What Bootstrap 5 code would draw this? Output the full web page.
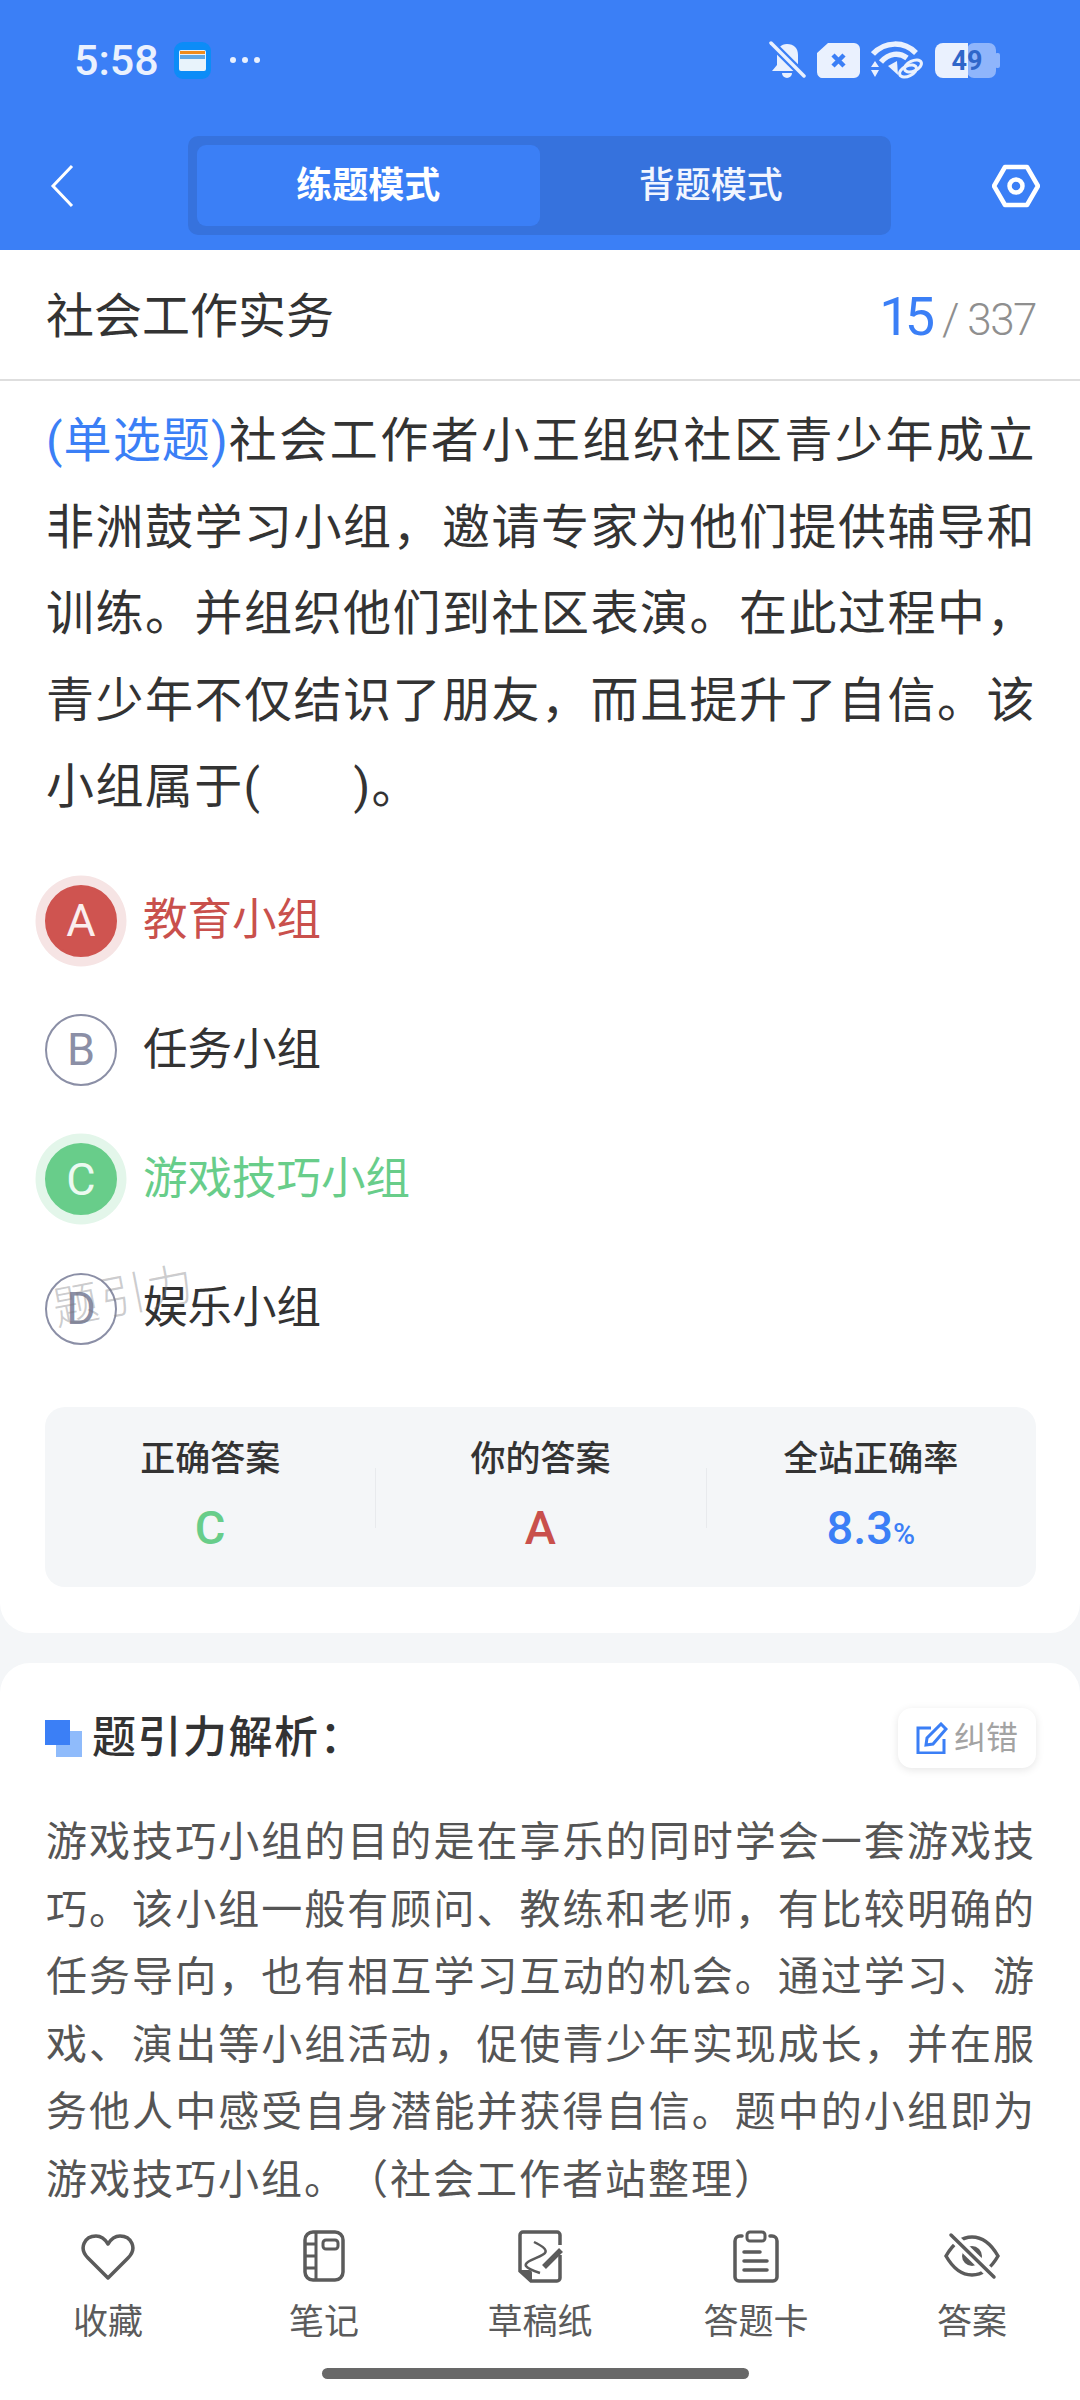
<!DOCTYPE html>
<html lang="zh">
<head>
<meta charset="UTF-8" />
<meta name="viewport" content="width=device-width, initial-scale=1.0" />
<title>社会工作实务</title>
<link href="https://cdn.jsdelivr.net/npm/bootstrap@5.3.3/dist/css/bootstrap.min.css" rel="stylesheet">
<style>
  html, body { margin: 0; height: 2400px; overflow: hidden; }
  body {
    width: 1080px;
    background: #f4f6f8;
    color: #333;
    font-family: Roboto, "Noto Sans CJK SC", sans-serif;
  }
  .top-blue { background: #3b7ff6; height: 250px; color: #fff; }
  .status-row { height: 120px; margin-bottom: 16px; padding: 0 80px 0 74px; }
  .clock { font-size: 43px; font-weight: 500; line-height: 44px; color: #eaf1fe; width: 100px; }
  .dots { margin-left: 18px; }
  .status-icons { gap: 11px; }
  .nav-zone { height: 99px; padding: 0 40px 0 50px; }
  .seg-box { width: 703px; height: 99px; margin-left: 114px; background: #3672dd; border-radius: 10px; padding: 9px; }
  .seg-item { width: 345px; height: 81px; font-size: 36px; border-radius: 9px; font-weight: 500; color: #f2f6ff; }
  .seg-on { background: #3b7ff6; font-weight: 700; color: #fff; }
  .main-card { background: #fff; height: 1383px; border-radius: 0 0 30px 30px; }
  .title-row { height: 131px; padding: 5px 44px 0 46px; border-bottom: 2px solid #dedede; }
  .title-txt { font-size: 48px; line-height: 1; color: #333; }
  .num-now { font-size: 54px; font-weight: 400; letter-spacing: -5px; color: #3b7ff6; line-height: 1; }
  .num-all { font-size: 44px; font-weight: 300; letter-spacing: -1.500px; color: #8f8f8f; line-height: 1; margin-left: 12px; }
  .q-text { font-size: 48px; line-height: 86.5px; letter-spacing: 1.4px; text-align: justify; padding: 17px 44px 0 46px; margin: 0; height: 475px; color: #333; }
  .q-type { color: #3b7ff6; letter-spacing: 0; }
  .blank-gap { display: inline-block; width: 92px; }
  .opt-list { padding: 0 0 0 45px; position: relative; height: 551px; }
  .opt-row { height: 129.3px; }
  .opt-ball { width: 72px; height: 72px; flex: none; border: 2px solid #8b8fa6; border-radius: 50%; font-size: 45px; font-weight: 400; color: #8b8fa6; line-height: 1; }
  .opt-txt { font-size: 44.5px; margin-left: 26px; color: #333; line-height: 1; }
  .ball-red { background: #cf5450; border-color: #cf5450; color: #fbeeee; box-shadow: 0 0 0 9.500px #f6e4e4; }
  .ball-green { background: #68cd8a; border-color: #68cd8a; color: #ecfaf1; box-shadow: 0 0 0 9.500px #e3f6ea; }
  .txt-red { color: #c9504c; }
  .txt-green { color: #68cd8a; }
  .water-mark { position: absolute; left: 52px; top: 417px; font-size: 46px; font-weight: 300; color: rgba(120, 120, 125, .38); transform: rotate(-11deg); line-height: 1; letter-spacing: 2px; }
  .stat-box { background: #f4f6f8; height: 180px; margin: 0 44px 0 45px; border-radius: 20px; }
  .stat-cell { width: 33.33%; height: 180px; position: relative; padding-top: 33px; }
  .stat-cell + .stat-cell::before { content: ""; position: absolute; left: 0; top: 61px; height: 60px; width: 1px; background: #e8eaed; }
  .stat-label { font-size: 35px; font-weight: 500; line-height: 40px; color: #333; }
  .stat-val { font-size: 47px; font-weight: 500; line-height: 50px; margin-top: 23px; }
  .stat-val small { font-size: 30px; font-weight: 500; }
  .txt-blue { color: #3b7ff6; }
  .ana-card { background: #fff; margin-top: 30px; height: 600px; border-radius: 30px 30px 0 0; padding: 45px 44px 0 45px; }
  .ana-head { height: 60px; }
  .ana-mark { width: 38px; height: 38px; flex: none; margin-right: 9px; margin-top: 2px; }
  .ana-title { font-size: 44px; font-weight: 500; color: #333; letter-spacing: 1.500px; line-height: 1; }
  .fix-btn { width: 138px; height: 60px; background: #fff; border-radius: 14px; box-shadow: 0 2px 8px rgba(0, 0, 0, .1); font-size: 32px; color: #a3a3a3; gap: 6px; }
  .ana-text { font-size: 41px; line-height: 67.6px; letter-spacing: 2px; text-align: justify; text-spacing-trim: space-all; font-feature-settings: "palt" 0; color: #555; margin: 41px 0 0 1px; width: 990px; }
  .dock { position: absolute; left: 0; top: 2210px; width: 1080px; height: 190px; background: #fff; padding-top: 18px; }
  .dock-item { width: 216px; color: #5b5b5b; font-size: 35px; line-height: 40px; }
  .dock-ico { height: 56px; margin-bottom: 19px; }
  .home-bar { position: absolute; left: 322px; top: 158px; width: 427px; height: 11px; border-radius: 6px; background: #686868; }
</style>
</head>
<body class="position-relative">
  <div class="top-blue">
    <div class="status-row d-flex align-items-center">
      <span class="clock">5:58</span>
      <svg width="37" height="37" viewBox="0 0 37 37"><rect width="37" height="37" rx="9" fill="#0c8cf7"/><rect x="5" y="8" width="27" height="21" rx="2" fill="#e8f3fb"/><rect x="6" y="9" width="25" height="3" fill="#f08c1c"/><rect x="6" y="13" width="25" height="4" fill="#5fa8e6"/></svg>
      <svg class="dots" width="32" height="12" viewBox="0 0 32 12"><circle cx="4" cy="6" r="3" fill="#eaf1fe"/><circle cx="16" cy="6" r="3" fill="#eaf1fe"/><circle cx="28" cy="6" r="3" fill="#eaf1fe"/></svg>
      <div class="status-icons ms-auto d-flex align-items-center">
        <svg width="37" height="39" viewBox="0 0 37 39"><path d="M18 3c7 0 11 4 11 11v10l5 6H3l5-6v-10c0-7 4-11 10-11zM13 32h10a5 5 0 0 1-10 0z" fill="#eaf1fe"/><path d="M1 1l34 34" stroke="#3b7ff6" stroke-width="8"/><path d="M2 2l33 33" stroke="#eaf1fe" stroke-width="3.500" stroke-linecap="round"/></svg>
        <svg width="43" height="35" viewBox="0 0 43 35"><path d="M11 0h26a6 6 0 0 1 6 6v23a6 6 0 0 1-6 6H7a6 6 0 0 1-7-6V10z" fill="#eaf1fe"/><path d="M16 12l11 11M27 12L16 23" stroke="#3b7ff6" stroke-width="4.500"/></svg>
        <svg width="53" height="38" viewBox="0 0 53 38"><path d="M2 13C14 0 33 0 45 12" fill="none" stroke="#eaf1fe" stroke-width="5.500"/><path d="M10 21c8-9 18-10 26-4" fill="none" stroke="#eaf1fe" stroke-width="5.500"/><path d="M17 25l9-5 1 14z" fill="#eaf1fe"/><path d="M4 20l4 6H0zM4 36l4-7H0z" fill="#eaf1fe"/><ellipse cx="37" cy="30" rx="9" ry="5" fill="#3b7ff6" stroke="#eaf1fe" stroke-width="3" transform="rotate(-25 37 30)"/><ellipse cx="42" cy="25" rx="9" ry="5" fill="none" stroke="#eaf1fe" stroke-width="3" transform="rotate(-25 42 25)"/></svg>
        <svg width="65" height="35" viewBox="0 0 65 35"><rect x="32" y="0" width="29" height="35" rx="7" fill="#8fb5fb"/><rect x="60" y="10" width="5" height="15" rx="2" fill="#8fb5fb"/><path d="M8 0h25v35H8a8 8 0 0 1-8-8V8a8 8 0 0 1 8-8z" fill="#eaf1fe"/><text x="32" y="27" text-anchor="middle" font-family="Roboto" font-weight="700" font-size="27" fill="#2f66c9">49</text></svg>
      </div>
    </div>
    <div class="nav-zone d-flex align-items-center">
      <svg width="24" height="44" viewBox="0 0 24 44"><path d="M22 2L3 22l19 20" fill="none" stroke="#fff" stroke-width="3"/></svg>
      <div class="seg-box d-flex">
        <div class="seg-item seg-on d-flex align-items-center justify-content-center">练题模式</div>
        <div class="seg-item d-flex align-items-center justify-content-center">背题模式</div>
      </div>
      <svg class="ms-auto" width="48" height="44" viewBox="0 0 48 44"><path d="M13 3h22l11 19-11 19H13L2 22z" fill="none" stroke="#fff" stroke-width="4.500" stroke-linejoin="round"/><circle cx="24" cy="22" r="6.500" fill="none" stroke="#fff" stroke-width="4.500"/></svg>
    </div>
  </div>

  <div class="main-card">
    <div class="title-row d-flex align-items-center justify-content-between">
      <span class="title-txt">社会工作实务</span>
      <span class="d-flex align-items-baseline"><span class="num-now">15</span><span class="num-all">/ 337</span></span>
    </div>
    <p class="q-text"><span class="q-type">(单选题)</span>社会工作者小王组织社区青少年成立非洲鼓学习小组&#xFF0C;邀请专家为他们提供辅导和训练。并组织他们到社区表演。在此过程中&#xFF0C;青少年不仅结识了朋友&#xFF0C;而且提升了自信。该小组属于(<span class="blank-gap"></span>)。</p>
    <div class="opt-list">
      <div class="opt-row d-flex align-items-center">
        <span class="opt-ball ball-red d-flex align-items-center justify-content-center">A</span>
        <span class="opt-txt txt-red">教育小组</span>
      </div>
      <div class="opt-row d-flex align-items-center">
        <span class="opt-ball d-flex align-items-center justify-content-center">B</span>
        <span class="opt-txt">任务小组</span>
      </div>
      <div class="opt-row d-flex align-items-center">
        <span class="opt-ball ball-green d-flex align-items-center justify-content-center">C</span>
        <span class="opt-txt txt-green">游戏技巧小组</span>
      </div>
      <div class="opt-row d-flex align-items-center">
        <span class="opt-ball d-flex align-items-center justify-content-center">D</span>
        <span class="opt-txt">娱乐小组</span>
      </div>
      <span class="water-mark">题引力</span>
    </div>
    <div class="stat-box d-flex text-center">
      <div class="stat-cell">
        <div class="stat-label">正确答案</div>
        <div class="stat-val txt-green">C</div>
      </div>
      <div class="stat-cell">
        <div class="stat-label">你的答案</div>
        <div class="stat-val txt-red">A</div>
      </div>
      <div class="stat-cell">
        <div class="stat-label">全站正确率</div>
        <div class="stat-val txt-blue">8.3<small>%</small></div>
      </div>
    </div>
  </div>

  <div class="ana-card">
    <div class="ana-head d-flex align-items-center justify-content-between">
      <div class="d-flex align-items-center">
        <svg class="ana-mark" viewBox="0 0 38 38"><rect x="11" y="11" width="26" height="26" fill="#8fbbfb"/><rect width="25" height="25" fill="#3b7ff6"/></svg>
        <span class="ana-title">题引力解析&#xFF1A;</span>
      </div>
      <div class="fix-btn d-flex align-items-center justify-content-center">
        <svg width="32" height="32" viewBox="0 0 32 32"><path d="M15 6H2v25h26V17" fill="none" stroke="#3b7ff6" stroke-width="3"/><path d="M10 23l1-7L25 2l5 5-13 15z" fill="none" stroke="#3b7ff6" stroke-width="3"/></svg>
        <span>纠错</span>
      </div>
    </div>
    <p class="ana-text">游戏技巧小组的目的是在享乐的同时学会一套游戏技巧。该小组一般有顾问、教练和老师&#xFF0C;有比较明确的任务导向&#xFF0C;也有相互学习互动的机会。通过学习、游戏、演出等小组活动&#xFF0C;促使青少年实现成长&#xFF0C;并在服务他人中感受自身潜能并获得自信。题中的小组即为游戏技巧小组。&#xFF08;社会工作者站整理&#xFF09;</p>
  </div>

  <div class="dock d-flex">
    <div class="dock-item d-flex flex-column align-items-center">
      <svg class="dock-ico" width="54" height="56" viewBox="0 0 54 56"><path d="M27 50L7 30C-3 20 4 8 15 8c5 0 9 3 12 8 3-5 7-8 12-8 11 0 18 12 8 22z" fill="none" stroke="#5b5b5b" stroke-width="3.500" stroke-linejoin="round"/></svg>
      <span>收藏</span>
    </div>
    <div class="dock-item d-flex flex-column align-items-center">
      <svg class="dock-ico" width="44" height="56" viewBox="0 0 44 56"><rect x="3" y="4" width="38" height="48" rx="8" fill="none" stroke="#5b5b5b" stroke-width="3.500"/><path d="M14 4v48M3 16h11M3 28h11M3 40h11" fill="none" stroke="#5b5b5b" stroke-width="3"/><rect x="21" y="12" width="15" height="9" rx="3" fill="none" stroke="#5b5b5b" stroke-width="3"/></svg>
      <span>笔记</span>
    </div>
    <div class="dock-item d-flex flex-column align-items-center">
      <svg class="dock-ico" width="46" height="56" viewBox="0 0 46 56"><path d="M43 17V7a3 3 0 0 0-3-3H6a3 3 0 0 0-3 3v36l11 10h26a3 3 0 0 0 3-3V27" fill="none" stroke="#5b5b5b" stroke-width="3.500"/><path d="M3 42h9a3 3 0 0 1 3 3v9z" fill="#5b5b5b"/><path d="M17 14c6 3 14 7 11 11S6 33 9 38c2 3 8 5 14 7" fill="none" stroke="#5b5b5b" stroke-width="2.500"/><path d="M27 39l17-17" stroke="#5b5b5b" stroke-width="5.500"/></svg>
      <span>草稿纸</span>
    </div>
    <div class="dock-item d-flex flex-column align-items-center">
      <svg class="dock-ico" width="46" height="56" viewBox="0 0 46 56"><path d="M9 8H7a5 5 0 0 0-5 5v36a4 4 0 0 0 4 4h34a4 4 0 0 0 4-4V13a5 5 0 0 0-5-5h-2" fill="none" stroke="#5b5b5b" stroke-width="3.500" stroke-linecap="round"/><rect x="14" y="4" width="18" height="9" rx="3" fill="none" stroke="#5b5b5b" stroke-width="3"/><path d="M11 24h16M11 33h23M11 42h23" stroke="#5b5b5b" stroke-width="3.500" stroke-linecap="round"/></svg>
      <span>答题卡</span>
    </div>
    <div class="dock-item d-flex flex-column align-items-center">
      <svg class="dock-ico" width="56" height="56" viewBox="0 0 56 56"><path d="M2 28C10 14 19 9 28 9s18 5 26 19c-8 14-17 19-26 19S10 42 2 28z" fill="none" stroke="#5b5b5b" stroke-width="3.500"/><circle cx="28" cy="28" r="10" fill="#5b5b5b"/><path d="M7 7l43 42" stroke="#fff" stroke-width="10"/><path d="M7 7l43 42" stroke="#5b5b5b" stroke-width="3.500" stroke-linecap="round"/></svg>
      <span>答案</span>
    </div>
    <div class="home-bar"></div>
  </div>
  <script src="https://cdn.jsdelivr.net/npm/bootstrap@5.3.3/dist/js/bootstrap.bundle.min.js"></script>
</body>
</html>
